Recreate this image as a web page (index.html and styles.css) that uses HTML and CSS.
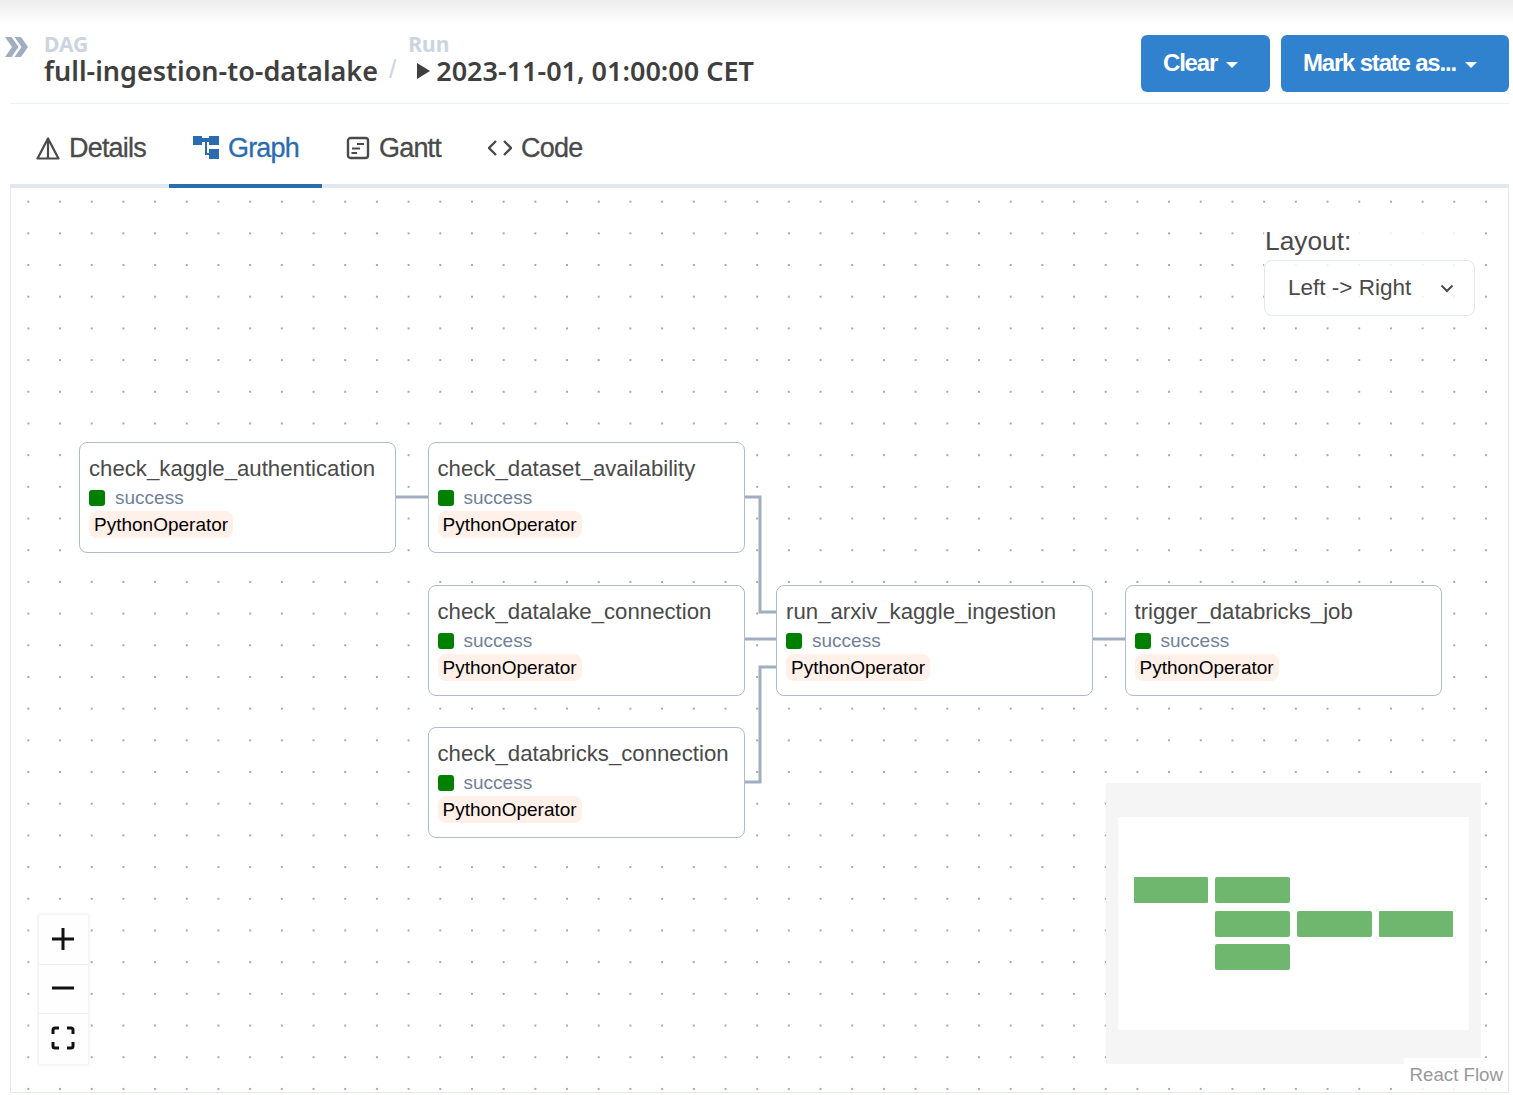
FILE: index.html
```html
<!DOCTYPE html>
<html lang="en">
<head>
    <meta charset="UTF-8">
    <meta name="viewport" content="width=device-width, initial-scale=1.0">
    <title>full-ingestion-to-datalake</title>
    <link rel="stylesheet" href="styles.css">
</head>
<body>
    <div class="top-shadow"></div>
    <div class="page">
        <header class="run-header">
            <svg class="crumb-arrows" viewBox="0 0 23 20"><path d="M0 0h6.5l7 10-7 10H0l7-10zM9.5 0H16l7 10-7 10H9.5l7-10z"/></svg>
            <div class="crumb">
                <div class="crumb-label">DAG</div>
                <div class="crumb-value">full-ingestion-to-datalake</div>
            </div>
            <span class="crumb-sep">/</span>
            <div class="crumb">
                <div class="crumb-label">Run</div>
                <div class="crumb-value crumb-run">
                    <svg class="run-icon" viewBox="0 0 13 16"><path d="M0 0l13 8-13 8z"/></svg>2023-11-01, 01:00:00 CET
                </div>
            </div>
            <div class="actions">
                <button class="btn btn-clear">Clear<span class="caret"></span></button>
                <button class="btn btn-mark">Mark state as...<span class="caret"></span></button>
            </div>
        </header>

        <nav class="tabs">
            <a class="tab tab-first">
                <svg class="tab-icon" viewBox="0 0 24 24"><path d="M12 2.5L1.5 22.5h21zM12 2.5v20" fill="none" stroke="currentColor" stroke-width="2.2" stroke-linejoin="round"/></svg>
                Details
            </a>
            <a class="tab active">
                <svg class="tab-icon graph-icon" viewBox="0 0 26 24"><path d="M0 0h9v9H0zM9 2h7v4H9zM16 0h10v9H16zM16 13h10v10H16zM12 6h2v11h2v2h-4z"/></svg>
                Graph
            </a>
            <a class="tab">
                <svg class="tab-icon" viewBox="0 0 24 24"><rect x="2" y="2" width="20" height="20" rx="2.5" fill="none" stroke="currentColor" stroke-width="2.4"/><path d="M11 8h7M6 12.5h8M5.5 17H11" fill="none" stroke="currentColor" stroke-width="2"/></svg>
                Gantt
            </a>
            <a class="tab">
                <svg class="tab-icon" viewBox="0 0 24 24"><path d="M8 5l-7 7 7 7M16 5l7 7-7 7" fill="none" stroke="currentColor" stroke-width="2.4"/></svg>
                Code
            </a>
        </nav>

        <main class="canvas">
            <svg class="edges" viewBox="0 0 1497 904">
                <path d="M384 309h33"/>
                <path d="M733 309h16v115h17"/>
                <path d="M733 451h33"/>
                <path d="M733 594h16v-115h17"/>
                <path d="M1081 451h33"/>
            </svg>

            <div class="node col-1 row-1">
                <div class="node-title">check_kaggle_authentication</div>
                <div class="node-status"><span class="status-box"></span>success</div>
                <span class="node-op">PythonOperator</span>
            </div>
            <div class="node col-2 row-1">
                <div class="node-title">check_dataset_availability</div>
                <div class="node-status"><span class="status-box"></span>success</div>
                <span class="node-op">PythonOperator</span>
            </div>
            <div class="node col-2 row-2">
                <div class="node-title">check_datalake_connection</div>
                <div class="node-status"><span class="status-box"></span>success</div>
                <span class="node-op">PythonOperator</span>
            </div>
            <div class="node col-2 row-3">
                <div class="node-title">check_databricks_connection</div>
                <div class="node-status"><span class="status-box"></span>success</div>
                <span class="node-op">PythonOperator</span>
            </div>
            <div class="node col-3 row-2">
                <div class="node-title">run_arxiv_kaggle_ingestion</div>
                <div class="node-status"><span class="status-box"></span>success</div>
                <span class="node-op">PythonOperator</span>
            </div>
            <div class="node col-4 row-2">
                <div class="node-title">trigger_databricks_job</div>
                <div class="node-status"><span class="status-box"></span>success</div>
                <span class="node-op">PythonOperator</span>
            </div>

            <div class="layout-panel">
                <label class="layout-label">Layout:</label>
                <div class="layout-select">
                    Left -&gt; Right
                    <svg class="select-chevron" viewBox="0 0 14 9"><path d="M1.5 1.5L7 7l5.5-5.5" fill="none" stroke="currentColor" stroke-width="2"/></svg>
                </div>
            </div>

            <div class="zoom-controls">
                <button class="zoom-btn"><svg viewBox="0 0 24 24"><path d="M12 1v22M1 12h22"/></svg></button>
                <button class="zoom-btn"><svg viewBox="0 0 24 24"><path d="M1 12h22"/></svg></button>
                <button class="zoom-btn"><svg viewBox="0 0 24 24"><path d="M2 8V4a2 2 0 0 1 2-2h4M16 2h4a2 2 0 0 1 2 2v4M22 16v4a2 2 0 0 1-2 2h-4M8 22H4a2 2 0 0 1-2-2v-4"/></svg></button>
            </div>

            <svg class="minimap" viewBox="0 0 375 281">
                <path class="mini-mask" d="M0 0h375v281H0zM12 34v213h351V34z" fill-rule="evenodd"/>
                <rect class="mini-node" x="28" y="94" width="74" height="26" rx="1"/>
                <rect class="mini-node" x="109" y="94" width="75" height="26" rx="2"/>
                <rect class="mini-node" x="109" y="128" width="75" height="26" rx="2"/>
                <rect class="mini-node" x="191" y="128" width="75" height="26" rx="2"/>
                <rect class="mini-node" x="273" y="128" width="74" height="26" rx="1"/>
                <rect class="mini-node" x="109" y="161" width="75" height="26" rx="2"/>
            </svg>

            <div class="attribution">React Flow</div>
        </main>
    </div>
</body>
</html>
```

FILE: styles.css
```css
body {
    font-family: "Liberation Sans", Arial, sans-serif;
    margin: 0;
    background-color: white;
    color: #4a4a4a;
    overflow: hidden;
}
.top-shadow {
    height: 24px;
    background: linear-gradient(#ececec, #ffffff);
}
.page {
    height: 1069px;
    margin: 0 4px 0 10px;
    display: flex;
    flex-direction: column;
}
.run-header {
    height: 79px;
    flex: none;
    display: flex;
    align-items: flex-start;
    border-bottom: 1px solid #edf2f7;
    position: relative;
}
.crumb-arrows {
    width: 23px;
    height: 20px;
    fill: #a0aec0;
    margin: 13px 0 0 -5px;
    flex: none;
}
.crumb {
    margin-left: 16px;
    padding-top: 8px;
}
.crumb-label {
    font-family: "Noto Sans", sans-serif;
    font-size: 21px;
    font-weight: 700;
    line-height: 24px;
    color: #cbd5e0;
}
.crumb-value {
    font-family: "Noto Sans", sans-serif;
    font-size: 27px;
    font-weight: 600;
    line-height: 30px;
    color: #3f3f3f;
    white-space: nowrap;
}
.crumb-sep {
    font-size: 26px;
    color: #cbd5e0;
    margin: 30px 0 0 11px;
}
.crumb-sep + .crumb {
    margin-left: 12px;
}
.crumb-run {
    margin-left: 9px;
}
.run-icon {
    width: 13px;
    height: 16px;
    fill: #3f3f3f;
    margin: 0 6px 6px 0;
    vertical-align: middle;
}
.actions {
    margin-left: auto;
    display: flex;
    gap: 11px;
    padding-top: 11px;
}
.btn {
    height: 57px;
    border: none;
    border-radius: 6px;
    padding: 0 0 2px 22px;
    background-color: #3182ce;
    color: white;
    font-family: "Liberation Sans", Arial, sans-serif;
    font-size: 24px;
    font-weight: 700;
    letter-spacing: -1.2px;
    display: flex;
    align-items: center;
}
.btn-clear {
    width: 129px;
}
.btn-mark {
    width: 228px;
}
.caret {
    width: 0;
    height: 0;
    margin: 4px 0 0 9px;
    border-left: 6px solid transparent;
    border-right: 6px solid transparent;
    border-top: 6px solid white;
}
.tabs {
    height: 84px;
    flex: none;
    display: flex;
    border-bottom: 4px solid #e2e8f0;
    box-sizing: border-box;
}
.tab {
    display: flex;
    align-items: center;
    gap: 9px;
    padding: 8px 23px 0 24px;
    height: 84px;
    box-sizing: border-box;
    border-bottom: 4px solid transparent;
    font-size: 27px;
    letter-spacing: -0.8px;
    -webkit-text-stroke: 0.3px;
    color: #4a4a4a;
    white-space: nowrap;
}
.tab-first {
    margin-left: 2px;
}
.tab.active {
    color: #2b6cb0;
    border-bottom-color: #2b6cb0;
}
.tab-icon {
    width: 24px;
    height: 24px;
    fill: currentColor;
    flex: none;
}
.graph-icon {
    width: 26px;
}
.canvas {
    flex: 1;
    position: relative;
    overflow: hidden;
    box-sizing: border-box;
    border: 1px solid #e2e8f0;
    border-top: none;
    background-image: radial-gradient(circle, #a8a8a8 1px, transparent 1.2px);
    background-size: 31.7px 31.7px;
    background-position: 1.5px -2.2px;
}
.edges {
    position: absolute;
    left: 0;
    top: 0;
    width: 1497px;
    height: 904px;
    fill: none;
    stroke: #a0aec0;
    stroke-width: 3;
}
.node {
    position: absolute;
    width: 317px;
    height: 111px;
    box-sizing: border-box;
    padding: 9px 9px;
    border: 1px solid #afbccb;
    border-radius: 8px;
    background-color: white;
}
.col-1 { left: 68px; }
.col-2 { left: 416.5px; }
.col-3 { left: 765px; }
.col-4 { left: 1113.5px; }
.row-1 { top: 254px; }
.row-2 { top: 396.5px; }
.row-3 { top: 539.3px; }
.node-title {
    font-size: 22.2px;
    line-height: 33px;
    color: #4a4a4a;
    white-space: nowrap;
}
.node-status {
    display: flex;
    align-items: center;
    height: 24px;
    margin-top: 1px;
    font-size: 19px;
    color: #718096;
}
.status-box {
    width: 16px;
    height: 16px;
    border-radius: 3px;
    background-color: green;
    margin-right: 10px;
}
.node-op {
    display: inline-block;
    padding: 0 5px;
    margin-top: 1px;
    line-height: 27px;
    font-size: 19px;
    color: black;
    background-color: #fff0ea;
    border-radius: 8px;
}
.layout-panel {
    position: absolute;
    left: 1253px;
    top: 38px;
    width: 211px;
    background-color: rgba(255, 255, 255, 0.85);
}
.layout-label {
    display: block;
    height: 34px;
    padding-left: 1px;
    font-size: 26.3px;
    line-height: 30px;
    color: #4a4a4a;
}
.layout-select {
    height: 56px;
    box-sizing: border-box;
    border: 1px solid #e2e8f0;
    border-radius: 8px;
    padding: 0 20px 0 23px;
    font-size: 22.5px;
    display: flex;
    align-items: center;
    justify-content: space-between;
    color: #4a4a4a;
}
.select-chevron {
    width: 14px;
    height: 9px;
}
.zoom-controls {
    position: absolute;
    left: 28px;
    top: 727px;
    width: 49px;
    box-shadow: 0 0 3px 1px rgba(0, 0, 0, 0.08);
    background-color: #fefefe;
}
.zoom-btn {
    display: flex;
    align-items: center;
    justify-content: center;
    width: 49px;
    height: 49.6px;
    padding: 0 1px 1px 0;
    border: none;
    border-bottom: 1px solid #eeeeee;
    background-color: #fefefe;
}
.zoom-btn:last-child {
    border-bottom: none;
}
.zoom-btn svg {
    width: 24px;
    height: 24px;
    fill: none;
    stroke: #111111;
    stroke-width: 3;
}
.minimap {
    position: absolute;
    left: 1095px;
    top: 595px;
    width: 375px;
    height: 281px;
    background-color: white;
}
.mini-mask {
    fill: #f5f5f5;
}
.mini-node {
    fill: #6fb76f;
}
.attribution {
    position: absolute;
    right: 0;
    bottom: 0;
    padding: 6px 5px 6px 6px;
    font-size: 18.7px;
    line-height: 22px;
    color: #999999;
    background-color: rgba(255, 255, 255, 0.85);
}
```
